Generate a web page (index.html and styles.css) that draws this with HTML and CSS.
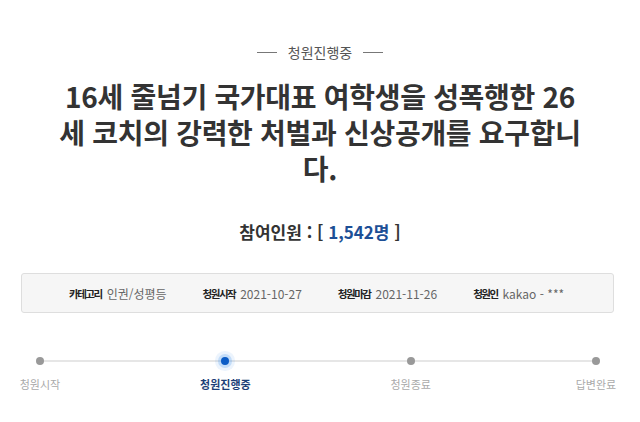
FILE: index.html
```html
<!DOCTYPE html>
<html lang="ko">
<head>
<meta charset="utf-8">
<link rel="stylesheet" href="styles.css">
</head>
<body>
<div class="page">
  <div class="status"><span class="dash"></span><span class="status-text">청원진행중</span><span class="dash"></span></div>
  <h1 class="title">16세 줄넘기 국가대표 여학생을 성폭행한 26세 코치의 강력한 처벌과 신상공개를 요구합니다.</h1>
  <div class="count">참여인원 : [ <span class="num">1,542명</span> ]</div>
  <div class="info">
    <div class="item"><span class="label">카테고리</span><span class="value">인권/성평등</span></div>
    <div class="item"><span class="label">청원시작</span><span class="value">2021-10-27</span></div>
    <div class="item"><span class="label">청원마감</span><span class="value">2021-11-26</span></div>
    <div class="item"><span class="label">청원인</span><span class="value">kakao - ***</span></div>
  </div>
  <div class="progress">
    <div class="step"><span class="dot"></span><span class="step-label">청원시작</span></div>
    <div class="step active"><span class="dot"></span><span class="step-label">청원진행중</span></div>
    <div class="step"><span class="dot"></span><span class="step-label">청원종료</span></div>
    <div class="step"><span class="dot"></span><span class="step-label">답변완료</span></div>
  </div>
</div>
</body>
</html>
```
FILE: styles.css
```css
html, body {
  margin: 0;
  padding: 0;
  background: #fff;
}
body {
  font-family: "Noto Sans CJK KR", "Noto Sans", sans-serif;
  color: #333;
}
.page {
  width: 640px;
  height: 422px;
  overflow: hidden;
  padding-top: 41px;
  box-sizing: border-box;
}
.status {
  display: flex;
  align-items: center;
  justify-content: center;
  gap: 11px;
  height: 22px;
}
.dash {
  width: 20px;
  height: 1px;
  background: #777;
}
.status-text {
  font-size: 14px;
  color: #555;
  line-height: 22px;
}
.title {
  margin: 15px auto 0;
  width: 532px;
  text-align: center;
  font-size: 28px;
  font-weight: 700;
  line-height: 36px;
  color: #333;
  letter-spacing: -0.3px;
  word-break: break-all;
}
.count {
  margin-top: 33px;
  text-align: center;
  font-size: 17px;
  font-weight: 700;
  line-height: 26px;
  color: #333;
}
.num {
  color: #1d4f96;
}
.info {
  margin: 28px 26px 0 21px;
  height: 40px;
  box-sizing: border-box;
  border: 1px solid #dedede;
  border-radius: 3px;
  background: #f6f6f6;
  display: flex;
  align-items: center;
  padding-left: 47px;
  gap: 36px;
}
.item {
  display: flex;
  gap: 5px;
  align-items: center;
}
.label {
  font-size: 10.5px;
  font-weight: 700;
  color: #222;
  letter-spacing: -1.5px;
}
.value {
  font-size: 12px;
  color: #666;
}
.progress {
  position: relative;
  margin-top: 37px;
  width: 636px;
  display: flex;
  justify-content: space-between;
}
.progress::before {
  content: "";
  position: absolute;
  left: 40px;
  right: 40px;
  top: 10px;
  height: 2px;
  background: #e6e6e6;
}
.step {
  position: relative;
  width: 80px;
  display: flex;
  flex-direction: column;
  align-items: center;
}
.dot {
  width: 8px;
  height: 8px;
  margin-top: 7px;
  border-radius: 50%;
  background: #999;
}
.step.active .dot {
  background: #0b5cc6;
  box-shadow: 0 0 0 3px rgba(70, 150, 240, 0.25), 0 0 0 6px rgba(70, 150, 240, 0.1);
}
.step-label {
  margin-top: 11px;
  font-size: 11px;
  color: #aaa;
  white-space: nowrap;
  line-height: 16px;
}
.step.active .step-label {
  color: #1d3f77;
  font-weight: 700;
}
```
